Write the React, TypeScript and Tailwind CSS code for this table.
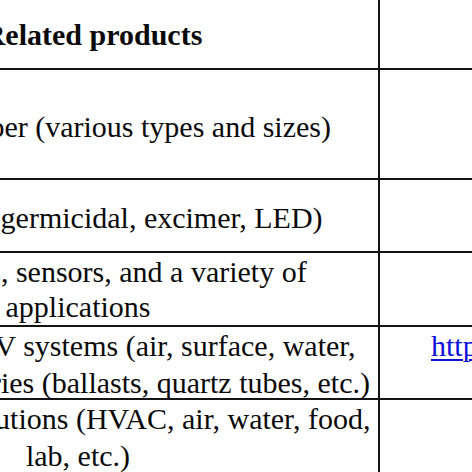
import React from "react";

const serif = { fontFamily: '"Liberation Serif", "Times New Roman", serif' };

function Row({
  left,
  right,
  h,
  bold,
  leftClass = "",
  rightClass = "",
}: {
  left: React.ReactNode;
  right?: React.ReactNode;
  h: string;
  bold?: boolean;
  leftClass?: string;
  rightClass?: string;
}) {
  return (
    <div className={`flex border-b-2 border-[#141414] ${h}`}>
      <div
        className={`w-[602px] shrink-0 flex flex-col items-center text-center border-r-2 border-[#141414] ${bold ? "font-bold" : ""} ${leftClass}`}
      >
        {left}
      </div>
      <div className={`w-[400px] shrink-0 flex flex-col ${rightClass}`}>{right}</div>
    </div>
  );
}

export default function App() {
  return (
    <div
      className="w-[472px] h-[472px] overflow-hidden bg-white text-[30px] leading-[35px] text-[#0a0a0a]"
      style={serif}
    >
      <div className="ml-[-222px] w-[1010px] flex flex-col">
        <Row
          h="h-[70px]"
          bold
          leftClass="justify-center pl-[30px] pt-[1px]"
          left={<div className="whitespace-nowrap">Related products</div>}
        />
        <Row
          h="h-[110px]"
          leftClass="justify-center pt-[5px]"
          left={<div className="whitespace-nowrap">UV test chamber (various types and sizes)</div>}
        />
        <Row
          h="h-[73px]"
          leftClass="justify-center pt-[3px]"
          left={<div className="whitespace-nowrap">UV-C lamps (germicidal, excimer, LED)</div>}
        />
        <Row
          h="h-[74px]"
          leftClass="justify-center"
          left={
            <>
              <div className="whitespace-nowrap">Radiometers, sensors, and a variety of</div>
              <div className="whitespace-nowrap">applications</div>
            </>
          }
        />
        <Row
          h="h-[73px]"
          leftClass="justify-start leading-[37px]"
          left={
            <>
              <div className="whitespace-nowrap">Customizable UV systems (air, surface, water,</div>
              <div className="whitespace-nowrap">and their accessories (ballasts, quartz tubes, etc.)</div>
            </>
          }
          rightClass="justify-start pl-[51px] leading-[37px]"
          right={
            <a
              href="#"
              className="text-[#1010d8] underline underline-offset-[3px] decoration-[2px] whitespace-nowrap"
            >
              https://www.uvproducts.com
            </a>
          }
        />
        <Row
          h="h-[80px]"
          leftClass="justify-start leading-[37px]"
          left={
            <>
              <div className="whitespace-nowrap">Complete UV solutions (HVAC, air, water, food,</div>
              <div className="whitespace-nowrap">lab, etc.)</div>
            </>
          }
        />
      </div>
    </div>
  );
}
